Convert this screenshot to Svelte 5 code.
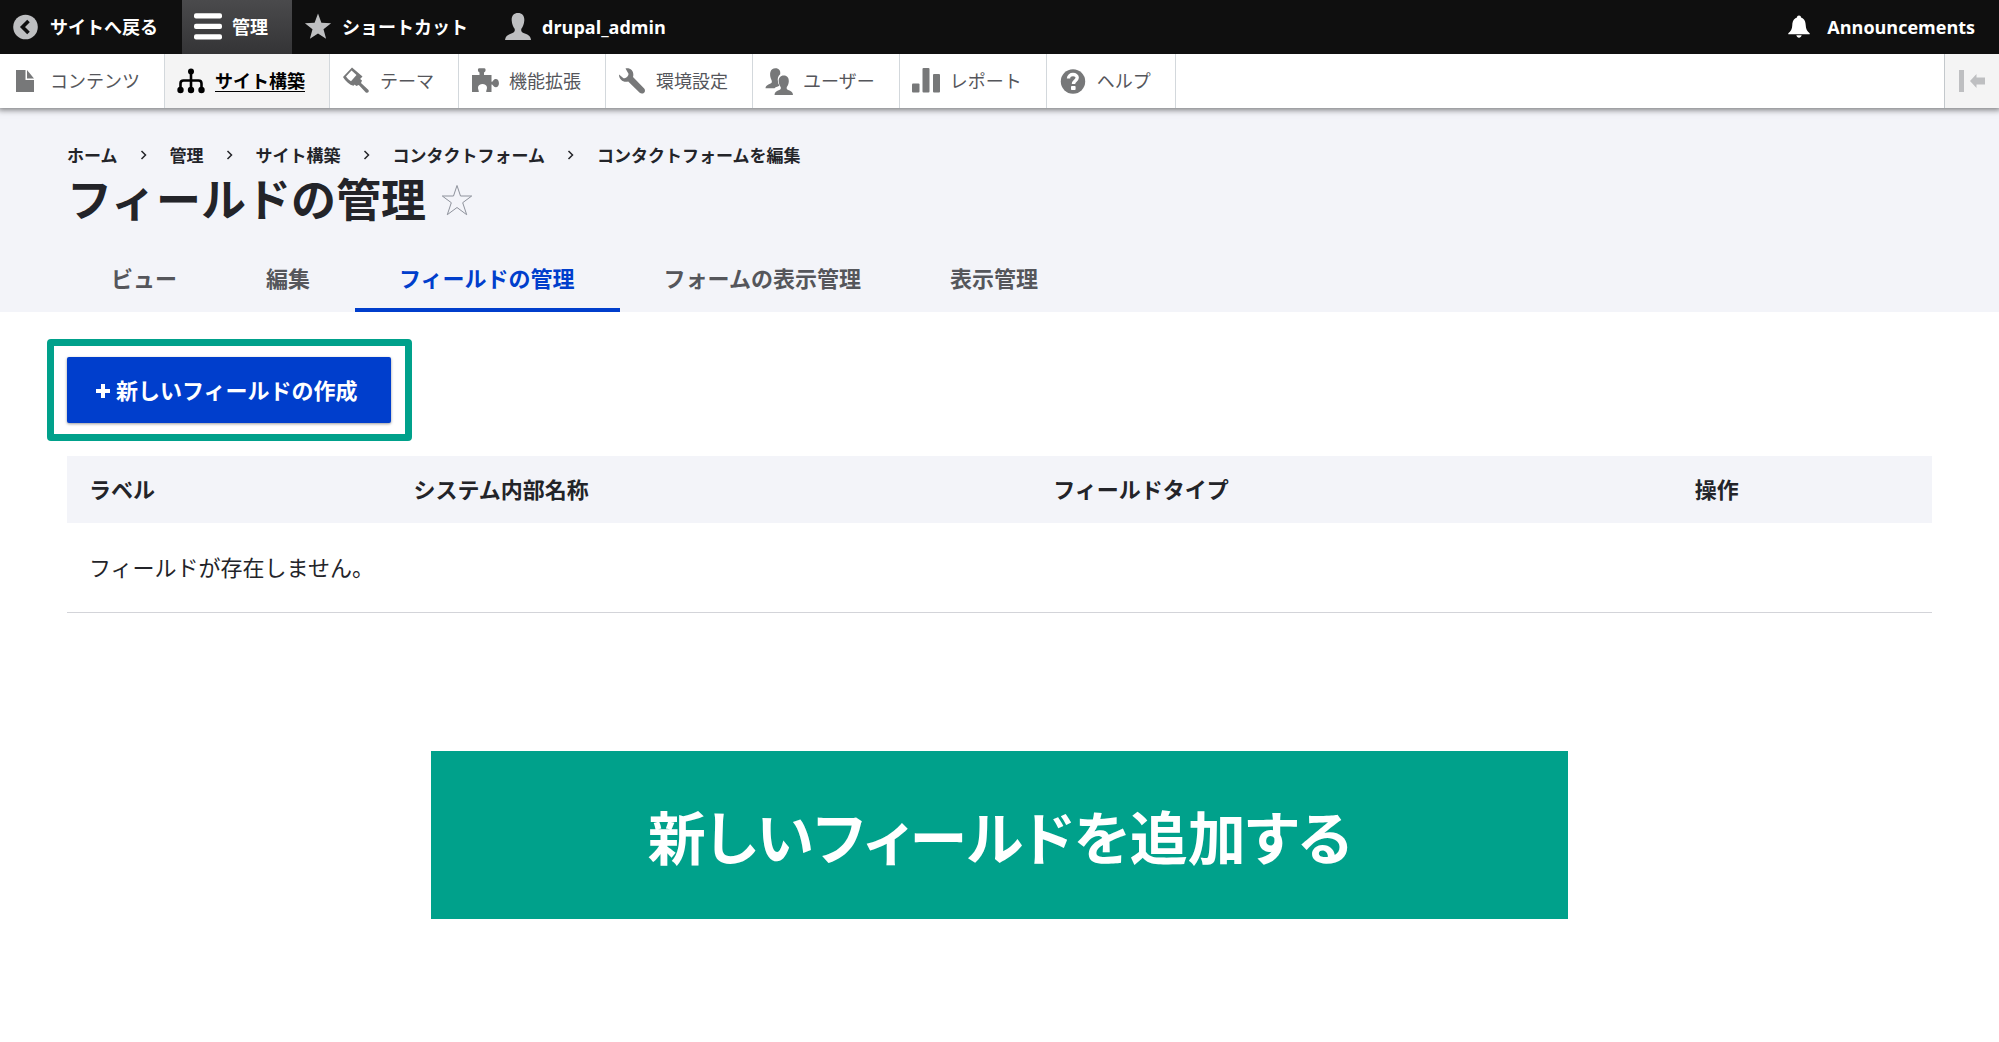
<script>
  const trail = ['ホーム', '管理', 'サイト構築', 'コンタクトフォーム', 'コンタクトフォームを編集'];

  const trayItems = [
    { icon: 'file', label: 'コンテンツ' },
    { icon: 'sitemap', label: 'サイト構築', active: true },
    { icon: 'brush', label: 'テーマ' },
    { icon: 'puzzle', label: '機能拡張' },
    { icon: 'wrench', label: '環境設定' },
    { icon: 'people', label: 'ユーザー' },
    { icon: 'chart', label: 'レポート' },
    { icon: 'help', label: 'ヘルプ' }
  ];

  const tabs = [
    { label: 'ビュー' },
    { label: '編集' },
    { label: 'フィールドの管理', active: true },
    { label: 'フォームの表示管理' },
    { label: '表示管理' }
  ];

  const columns = ['ラベル', 'システム内部名称', 'フィールドタイプ', '操作'];
</script>

{#snippet icon(name)}
  <svg class="icon" viewBox="0 0 28 28" aria-hidden="true">
    {#if name === 'back'}
      <circle cx="13.5" cy="14" r="12.3" />
      <path d="M16.5 8l-6 6 6 6" fill="none" stroke="#0f0f0f" stroke-width="3.6" />
    {:else if name === 'bars'}
      <rect x="0" y="0.3" width="28" height="5.2" rx="2" />
      <rect x="0" y="10.8" width="28" height="5.2" rx="2" />
      <rect x="0" y="21.3" width="28" height="5.2" rx="2" />
    {:else if name === 'star'}
      <path d="M14 .5l3.4 9.3 9.7.4-7.6 6.1 2.6 9.5-8.1-5.4-8.1 5.4 2.6-9.5-7.600-6.1 9.700-.4z" />
    {:else if name === 'user'}
      <path d="M14 0c4.200 0 6.600 3 6.300 7.600-.2 3.700-1.500 6.400-2.900 8.100-.6 2 .1 3.600 2.100 4.400 3.600 1.300 7 2.300 7.500 6.900H1c.5-4.600 3.900-5.600 7.500-6.900 2-.8 2.700-2.400 2.100-4.400-1.400-1.700-2.700-4.400-2.900-8.100C7.400 3 9.800 0 14 0z" />
    {:else if name === 'bell'}
      <path d="M14 2.500c1.300 0 2 .8 2 1.900 3.500 1.300 4.600 4.200 4.700 7.600.1 4 1.500 6.500 4 8.300v1H3.300v-1c2.500-1.800 3.900-4.300 4-8.300.1-3.400 1.200-6.300 4.700-7.600 0-1.100.7-1.900 2-1.900z" />
      <path d="M11.300 22.300h5.400c-.5 1.600-1.400 2.400-2.700 2.400s-2.200-.8-2.700-2.400z" />
    {:else if name === 'file'}
      <path d="M4 3h9.500v10H22v12H4z" />
      <path d="M15 3l7 8.500h-7z" />
    {:else if name === 'sitemap'}
      <g fill="none" stroke="currentColor" stroke-width="2.600">
        <path d="M14 5v17M3.500 22v-5.500q0-3 3-3h15q3 0 3 3V22" />
      </g>
      <circle cx="14" cy="4.500" r="3" />
      <circle cx="3.500" cy="23" r="3.200" />
      <circle cx="14" cy="23" r="3.200" />
      <circle cx="24.500" cy="23" r="3.200" />
    {:else if name === 'brush'}
      <path fill-rule="evenodd" d="M10 .5l10.500 9-9 9.200C7.500 18 4 14.500 1 10zM9.500 3.500L4 9.500c1.500 2 3 3.500 5 4.700L14.500 8z" />
      <path d="M17.500 11.500l2.500 2-1 2.500 7.500 7c1 2-.8 3.500-2.700 2.500l-7-7.500-2.500 1-2.300-2z" />
    {:else if name === 'puzzle'}
      <path d="M1 8h7.500V5.500C6.500 4.500 6.500 1.500 8 1.300h5.500c1.500.2 1.500 3.200-.5 4.200V8h7.500v6.800c1.500.3 1.600-2.800 4.300-2.800 4.200 0 4.200 8.300 0 8.300-2.700 0-2.800-3-4.300-2.700V25h-5.300c0-2 .8-2.600.8-4.300 0-4.900-9-4.900-9 0 0 1.700.8 2.300.8 4.300H1z" />
    {:else if name === 'wrench'}
      <path d="M7.500 1.500c5.500-1 9 3.300 7.500 8.500l11.200 11.500c2.500 3.300-1.500 6.700-4.500 4.300L10.200 14.500C5.500 16 .8 12.500 1 7.500l4.500 3.800c2.700 0 5-1.800 5-4.500z" />
    {:else if name === 'people'}
      <path d="M10.500 1.300c3.500 0 5.300 2.500 4.700 6-2.200 1.700-2.900 4.200-2.200 7.500.3 1.500.8 2.700 1.500 3.800-1.200 1-3.700 1.500-5 2.600H.5c0-4 5.700-3.700 6.300-6 .2-1.200-.3-2.200-.8-3.200C4.200 7 5 1.300 10.500 1.300z" />
      <path stroke="#fff" stroke-width="1" paint-order="stroke" d="M18.800 8.500c3.500 0 5.200 2.500 5 6-.2 2.600-1 4.200-2 5.500-.4 1.500 0 2.500 1.400 3 2.600 1 4.700 2 4.800 5H9.500c.1-3 2.200-4 4.800-5 1.400-.5 1.800-1.500 1.400-3-1-1.300-1.800-2.900-2-5.500-.2-3.500 1.600-6 5.100-6z" />
    {:else if name === 'chart'}
      <rect x="0" y="16.500" width="7.500" height="9" rx="1" />
      <rect x="10.500" y="1" width="7" height="24.500" rx="1" />
      <rect x="21" y="7" width="7" height="18.500" rx="1" />
    {:else if name === 'help'}
      <circle cx="14" cy="14.500" r="12.200" />
      <path d="M9.500 11.500c0-5.500 9-5 8.700-.8-.2 3.200-3.700 3-3.700 6.300" fill="none" stroke="#fff" stroke-width="3.400" />
      <rect x="12" y="19" width="4.600" height="4" rx=".8" fill="#fff" />
    {/if}
  </svg>
{/snippet}

<header class="toolbar">
  <nav class="bar" aria-label="ツールバー">
    <a href="#site">{@render icon('back')}サイトへ戻る</a>
    <a href="#manage" class="current">{@render icon('bars')}管理</a>
    <a href="#shortcuts">{@render icon('star')}ショートカット</a>
    <a href="#user">{@render icon('user')}drupal_admin</a>
    <a href="#announcements" class="announce">{@render icon('bell')}Announcements</a>
  </nav>
  <nav class="tray" aria-label="管理メニュー">
    {#each trayItems as item}
      <a href="#menu" class:active={item.active}>{@render icon(item.icon)}<span>{item.label}</span></a>
    {/each}
    <button class="orient" type="button" aria-label="垂直方向">
      <svg viewBox="0 0 28 22" aria-hidden="true">
        <path d="M1 0h5v22H1zM12 11l6.500-7v3.500H27v7h-8.500V18z" />
      </svg>
    </button>
  </nav>
</header>

<div class="page-head">
  <nav aria-label="パンくず">
    <ol class="trail">
      {#each trail as crumb, i}
        {#if i > 0}
          <li class="sep" aria-hidden="true">
            <svg viewBox="0 0 8 10"><path d="M1.500 1l4 4-4 4" /></svg>
          </li>
        {/if}
        <li><a href="#crumb">{crumb}</a></li>
      {/each}
    </ol>
  </nav>
  <div class="title">
    <h1>フィールドの管理</h1>
    <button type="button" aria-label="ショートカットに追加">
      <svg viewBox="0 0 32 34" aria-hidden="true">
        <path d="M16 2.500l3.500 10.500h11.200l-9 6.700 4 12-9.700-7.200-9.700 7.200 4-12-9-6.700h11.200z" />
      </svg>
    </button>
  </div>
  <nav class="tabs" aria-label="タブ">
    {#each tabs as tab}
      <a href="#tab" class:active={tab.active}>{tab.label}</a>
    {/each}
  </nav>
</div>

<main>
  <div class="highlight">
    <a class="create" href="#new-field">
      <svg viewBox="0 0 14 14" aria-hidden="true"><path d="M5 0h4v5h5v4H9v5H5V9H0V5h5z" /></svg>
      新しいフィールドの作成
    </a>
  </div>

  <table>
    <thead>
      <tr>
        {#each columns as column}
          <th scope="col">{column}</th>
        {/each}
      </tr>
    </thead>
    <tbody>
      <tr><td colspan="4">フィールドが存在しません。</td></tr>
    </tbody>
  </table>

  <p class="banner">新しいフィールドを追加する</p>
</main>

<style>
  :global(body) {
    margin: 0;
    background: #fff;
    color: #232429;
    font-family: 'Noto Sans CJK JP', sans-serif;
    font-size: 22px;
  }

  a {
    color: inherit;
    text-decoration: none;
  }

  button {
    padding: 0;
    border: 0;
    background: none;
    cursor: pointer;
  }

  .toolbar {
    position: relative;
    font-family: 'Open Sans', 'Noto Sans CJK JP', sans-serif;
    font-size: 18px;
    line-height: 26px;
    box-shadow: 0 0 6px 2px rgba(0, 0, 0, 0.5);
  }

  .bar,
  .tray {
    display: flex;
    height: 54px;
  }

  .bar {
    background: #0f0f0f;
    color: #fff;
    font-weight: 700;
  }

  .bar a,
  .tray a {
    display: flex;
    align-items: center;
    gap: 10px;
    padding: 0 24px 0 12px;
    white-space: nowrap;
  }

  .icon {
    flex: none;
    width: 28px;
    height: 28px;
    fill: currentColor;
  }

  .bar .icon {
    color: #bebfc1;
  }

  .bar .current {
    background: linear-gradient(#4a4a4c, #343436);
  }

  .bar .current .icon,
  .bar .announce .icon {
    color: #fff;
  }

  .bar .announce {
    margin-left: auto;
    gap: 14px;
  }

  .tray {
    background: #fff;
    color: #55565b;
  }

  .tray a {
    border-right: 1px solid #d3d8dc;
  }

  .tray .icon {
    color: #777879;
  }

  .tray .active {
    background: #f4f4f4;
    color: #000;
    font-weight: 700;
  }

  .tray .active .icon {
    color: #000;
  }

  .tray .active span {
    text-decoration: underline;
    text-decoration-thickness: 1px;
    text-underline-offset: 3px;
  }

  .orient {
    display: grid;
    place-items: center;
    width: 55px;
    margin-left: auto;
    border-left: 1px solid #c3c8cc;
    background: #f4f4f4;
  }

  .orient svg {
    width: 28px;
    height: 22px;
    fill: #bebfc1;
  }

  .page-head {
    padding: 33px 67px 0;
    background: #f3f4f9;
  }

  .trail {
    display: flex;
    margin: 0;
    padding: 0;
    list-style: none;
    font-size: 17px;
    font-weight: 700;
    line-height: 28px;
  }

  .sep {
    display: grid;
    place-items: center;
    width: 52px;
  }

  .sep svg {
    width: 8px;
    height: 10px;
    fill: none;
    stroke: #232429;
    stroke-width: 1.5;
  }

  .title {
    display: flex;
    align-items: center;
    gap: 15px;
  }

  h1 {
    margin: 0;
    font-size: 45px;
    line-height: 58px;
  }

  .title svg {
    display: block;
    width: 32px;
    height: 34px;
    padding-top: 4px;
    fill: none;
    stroke: #8e929c;
    stroke-width: 1;
  }

  .tabs {
    display: flex;
    margin-top: 19px;
    color: #55565b;
    font-weight: 700;
    line-height: 62px;
  }

  .tabs a {
    padding: 0 45px 0 44px;
    border-bottom: 4px solid transparent;
  }

  .tabs .active {
    border-color: #003ecc;
    color: #003ecc;
  }

  main {
    padding: 27px 67px;
  }

  .highlight {
    display: flex;
    width: fit-content;
    margin: 0 -20px;
    padding: 11px 14px 11px 13px;
    border: 7px solid #00a18b;
    border-radius: 4px;
  }

  .create {
    display: flex;
    align-items: center;
    gap: 6px;
    padding: 0 33px 2px 29px;
    border-radius: 2px;
    background: #003ecc;
    box-shadow: 0 1px 3px rgba(0, 0, 0, 0.4);
    color: #fff;
    font-weight: 700;
    line-height: 64px;
  }

  .create svg {
    width: 14px;
    height: 14px;
    padding-top: 4px;
    fill: currentColor;
  }

  table {
    width: 100%;
    margin-top: 15px;
    border-collapse: collapse;
    table-layout: fixed;
  }

  th,
  td {
    box-sizing: border-box;
    padding: 0 22px 3px;
    text-align: left;
  }

  th {
    height: 67px;
    background: #f3f4f9;
  }

  th:nth-child(1) {
    width: 17.4%;
  }

  th:nth-child(2) {
    width: 34.3%;
  }

  th:nth-child(3) {
    width: 34.4%;
  }

  td {
    height: 89px;
    border-bottom: 1px solid #d3d4d9;
  }

  .banner {
    width: 61%;
    margin: 138px auto 0;
    background: #00a18b;
    color: #fff;
    font-size: 58px;
    font-weight: 700;
    font-feature-settings: 'palt';
    line-height: 168px;
    text-align: center;
  }
</style>
